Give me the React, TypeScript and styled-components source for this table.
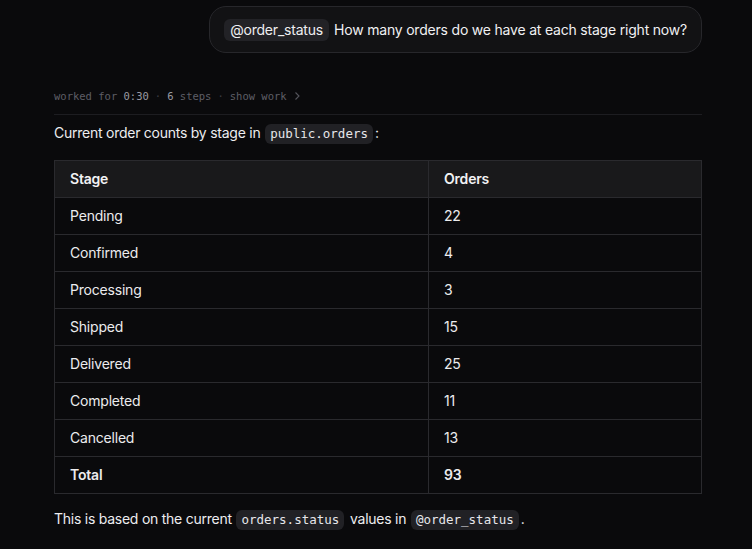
import React from 'react';
import styled, { createGlobalStyle } from 'styled-components';

const GlobalStyle = createGlobalStyle`
  html, body {
    margin: 0;
    padding: 0;
    background: #0a0a0c;
  }
  body {
    font-family: Inter, "Noto Sans", sans-serif;
    color: #ececee;
  }
`;

const Page = styled.div`
  width: 648px;
  padding: 6px 0 0 54px;
  display: flex;
  flex-direction: column;
  box-sizing: content-box;
`;

const UserRow = styled.div`
  display: flex;
  justify-content: flex-end;
`;

const Bubble = styled.div`
  display: flex;
  align-items: center;
  gap: 5px;
  height: 47px;
  box-sizing: border-box;
  padding: 0 14px 0 14px;
  border: 1px solid #27272b;
  border-radius: 17px;
  background: #121214;
  font-size: 14px;
  letter-spacing: -0.2px;
  color: #f0f0f2;
`;

const Mention = styled.span`
  display: inline-flex;
  align-items: center;
  height: 22px;
  padding: 0 6px;
  border-radius: 6px;
  background: #222226;
  color: #eeeef0;
`;

const Meta = styled.div`
  margin-top: 33px;
  display: flex;
  align-items: center;
  gap: 6px;
  height: 20px;
  font-family: "DejaVu Sans Mono", "Liberation Mono", monospace;
  font-size: 10.5px;
  color: #5e5e66;
  padding-bottom: 8px;
  border-bottom: 1px solid #1d1d21;
`;

const MetaStrong = styled.span`
  color: #9a9aa2;
`;

const Dot = styled.span`
  color: #3c3c42;
`;

const Paragraph = styled.p`
  margin: 6px 0 0;
  font-size: 14px;
  letter-spacing: -0.25px;
  line-height: 24px;
  color: #ededf0;
`;

const Code = styled.code`
  display: inline-block;
  font-family: "DejaVu Sans Mono", "Liberation Mono", monospace;
  font-size: 12.5px;
  letter-spacing: 0;
  line-height: 20px;
  padding: 0 5px;
  margin: 0 2px 0 1px;
  border-radius: 6px;
  background: #212125;
  color: #e6e6ea;
`;

const Table = styled.table`
  margin-top: 15px;
  width: 648px;
  border-collapse: collapse;
  font-size: 14px;
  letter-spacing: -0.2px;
`;

const HeadCell = styled.th<{ $w?: number }>`
  text-align: left;
  font-weight: 600;
  height: 37px;
  padding: 0 15px 2px;
  box-sizing: border-box;
  background: #19191b;
  border: 1px solid #2a2a2e;
  color: #f2f2f4;
  width: ${(p) => (p.$w ? `${p.$w}px` : 'auto')};
`;

const Cell = styled.td<{ $bold?: boolean }>`
  height: 37px;
  padding: 0 15px 1px;
  box-sizing: border-box;
  border: 1px solid #2a2a2e;
  color: #ececee;
  font-weight: ${(p) => (p.$bold ? 600 : 400)};
`;

const Footer = styled(Paragraph)`
  margin-top: 13px;
`;

const ROWS = [
  ['Pending', '22'],
  ['Confirmed', '4'],
  ['Processing', '3'],
  ['Shipped', '15'],
  ['Delivered', '25'],
  ['Completed', '11'],
  ['Cancelled', '13'],
];

function Chevron() {
  return (
    <svg width="8" height="10" viewBox="0 0 8 10" fill="none">
      <path d="M2.5 1.5 L6 5 L2.5 8.5" stroke="#55555c" strokeWidth="1.1" />
    </svg>
  );
}

export default function App() {
  return (
    <>
      <GlobalStyle />
      <Page>
        <UserRow>
          <Bubble>
            <Mention>@order_status</Mention>
            <span>How many orders do we have at each stage right now?</span>
          </Bubble>
        </UserRow>

        <Meta>
          <span>
            worked for <MetaStrong>0:30</MetaStrong>
          </span>
          <Dot>·</Dot>
          <span>
            <MetaStrong>6</MetaStrong> steps
          </span>
          <Dot>·</Dot>
          <span>show work</span>
          <Chevron />
        </Meta>

        <Paragraph>
          Current order counts by stage in <Code>public.orders</Code>:
        </Paragraph>

        <Table>
          <thead>
            <tr>
              <HeadCell $w={374}>Stage</HeadCell>
              <HeadCell>Orders</HeadCell>
            </tr>
          </thead>
          <tbody>
            {ROWS.map(([stage, count]) => (
              <tr key={stage}>
                <Cell>{stage}</Cell>
                <Cell>{count}</Cell>
              </tr>
            ))}
            <tr>
              <Cell $bold>Total</Cell>
              <Cell $bold>93</Cell>
            </tr>
          </tbody>
        </Table>

        <Footer>
          This is based on the current <Code>orders.status</Code> values in{' '}
          <Code>@order_status</Code>.
        </Footer>
      </Page>
    </>
  );
}
